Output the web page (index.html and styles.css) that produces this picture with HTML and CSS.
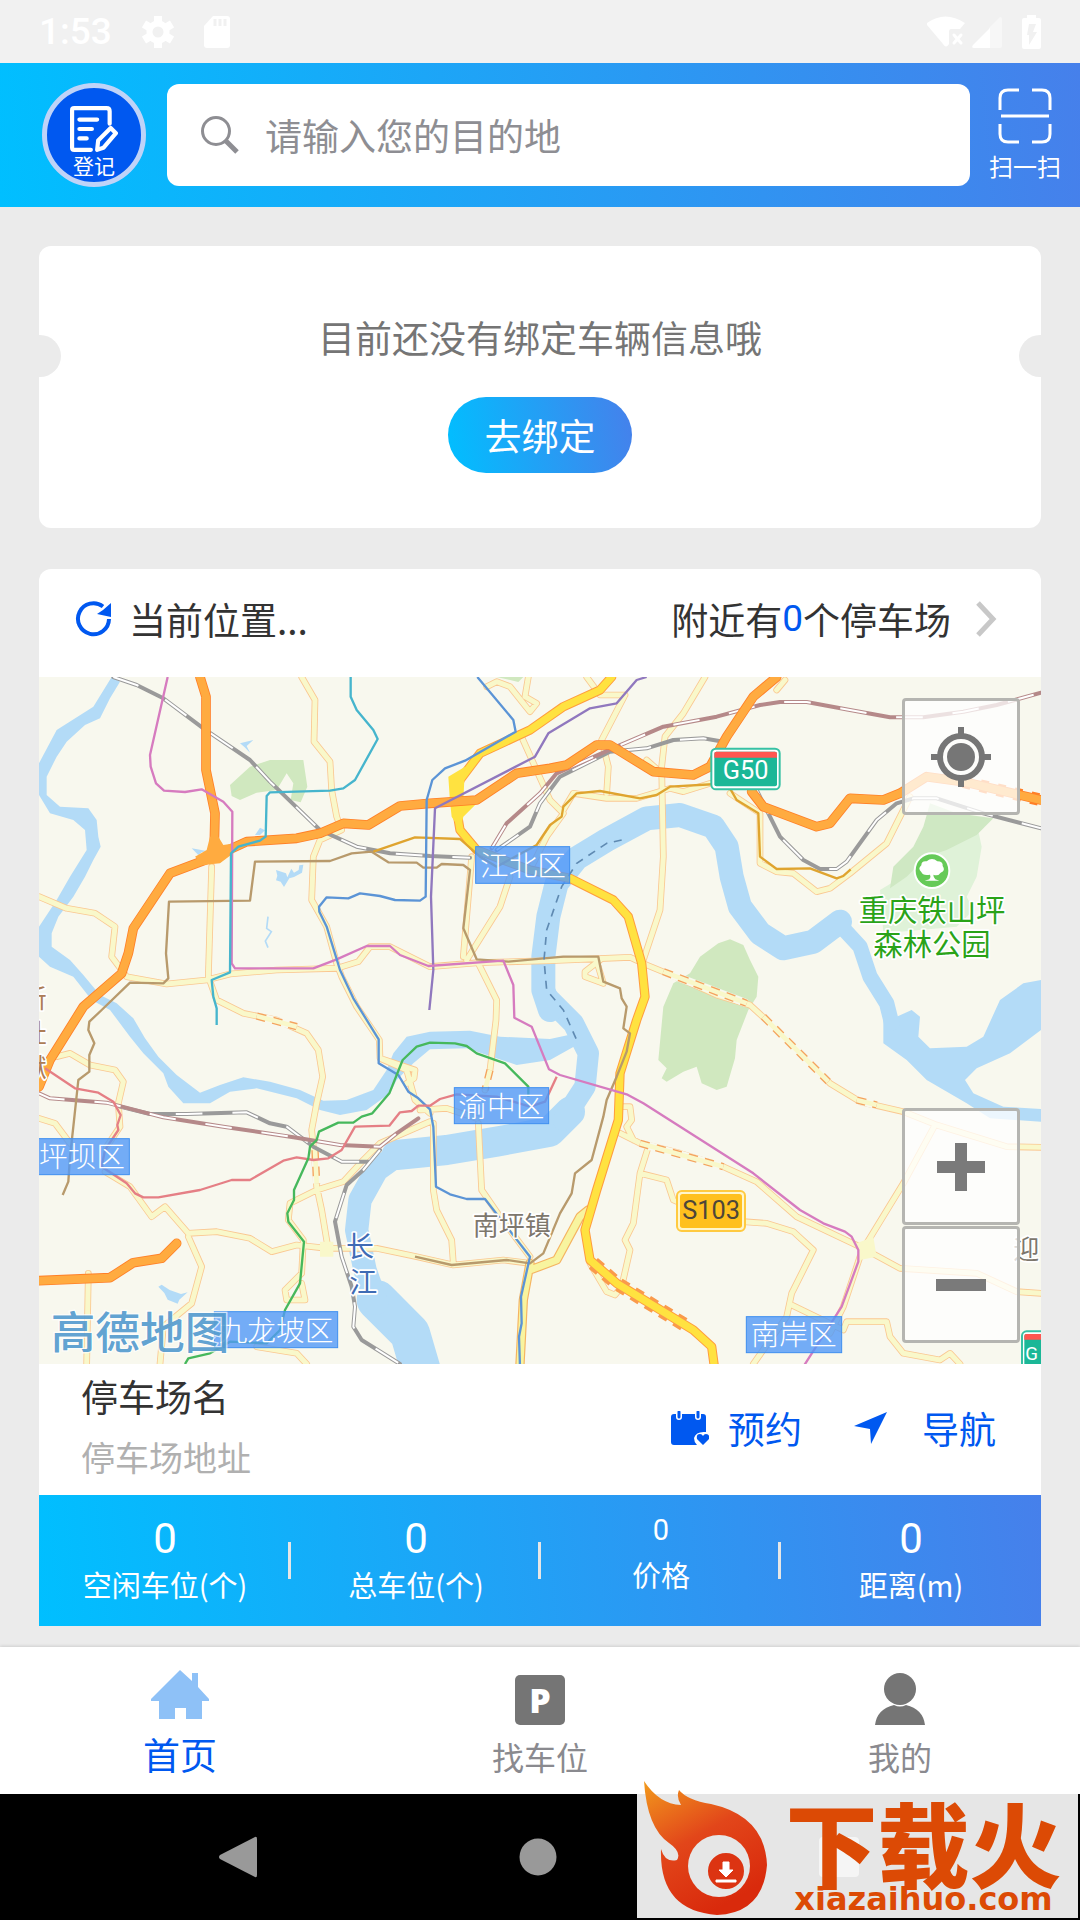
FILE: index.html
```html
<!DOCTYPE html>
<html lang="zh-CN">
<head>
    <meta charset="UTF-8">
    <meta name="viewport" content="width=device-width, initial-scale=1.0">
    <title>停车</title>
    <link rel="stylesheet" href="styles.css">
</head>
<body>
    <div class="status-bar">
        <span class="clock">1:53</span>
        <svg class="status-gear" width="32" height="34" viewBox="0 0 32 34" fill="none" stroke="#fff">
            <circle cx="16" cy="17" r="8.500" stroke-width="6"/>
            <path d="M16 1v6M16 27v6M2 9l5 3M25 22l5 3M2 25l5-3M25 12l5-3" stroke-width="8"/>
        </svg>
        <svg width="26" height="34" viewBox="0 0 26 34">
            <path d="M9 1h14q3 0 3 3v26q0 3-3 3H3q-3 0-3-3V11z" fill="#fff"/>
            <path d="M11 4v7M16 4v7M21 4v7" stroke="#f1f1f1" stroke-width="3"/>
        </svg>
        <svg class="status-right" width="40" height="34" viewBox="0 0 40 34">
            <path d="M1 8Q19-5 39 8l-5 6H25q-2 0-2 3v12q-3 5-6 0L1 10z" fill="#fff"/>
            <path d="M28 20l7 8M35 20l-7 8" stroke="#fff" stroke-width="3" stroke-linecap="round"/>
        </svg>
        <svg class="status-signal" width="30" height="34" viewBox="0 0 30 34">
            <path d="M28 2q2 0 2 2v27q0 2-2 2H17V13z" fill="#f7f7f7"/>
            <path d="M18 13v20H2q-3 0-1-3z" fill="#fff"/>
        </svg>
        <svg width="19" height="34" viewBox="0 0 19 34">
            <path d="M5 0h9v3h3q2 0 2 2v27q0 2-2 2H2q-2 0-2-2V5q0-2 2-2h3z" fill="#fff"/>
            <path d="M7 9h7l-3 8h4L7 30V20H5z" fill="#f1f1f1"/>
        </svg>
    </div>

    <header class="top-bar">
        <button class="register" type="button">
            <svg width="48" height="46" viewBox="0 0 46 44" fill="none" stroke="#fff" stroke-width="4" stroke-linecap="round" stroke-linejoin="round">
                <path d="M20 42H4q-2 0-2-2V4q0-2 2-2h31q3 0 3 3v12M9 13h17M9 22h12M9 31h7"/>
                <path d="M26 42l1-9 12-12 5 5-12 14z"/>
            </svg>
            <span>登记</span>
        </button>
        <form class="search">
            <svg width="38" height="38" viewBox="0 0 38 38" fill="none" stroke="#8e8e93">
                <circle cx="15" cy="15" r="13.500" stroke-width="3"/>
                <path d="M24 24l12 12" stroke-width="5"/>
            </svg>
            <input type="text" placeholder="请输入您的目的地" aria-label="目的地">
        </form>
        <button class="scan" type="button">
            <svg width="54" height="56" viewBox="0 0 54 56" fill="none" stroke="#fff" stroke-width="3">
                <path d="M2 22V10q0-8 8-8h11M34 2h10q8 0 8 8v12M2 36v10q0 8 8 8h11M34 54h10q8 0 8-8V36M3 28h48"/>
            </svg>
            <span>扫一扫</span>
        </button>
    </header>

    <main class="content">
        <section class="bind-card">
            <p>目前还没有绑定车辆信息哦</p>
            <button class="bind-btn" type="button">去绑定</button>
        </section>

        <section class="parking-card">
            <div class="parking-head">
                <svg width="38" height="38" viewBox="0 0 38 38">
                    <path d="M34 19A15.500 15.500 0 1 1 28 6.500" fill="none" stroke="#0058f0" stroke-width="4"/>
                    <path d="M36 3v14l-14-3 6-4z" fill="#0058f0"/>
                </svg>
                <span>当前位置...</span>
                <a class="nearby" href="#">附近有<b>0</b>个停车场
                    <svg width="22" height="36" viewBox="0 0 22 36" fill="none" stroke="#c8c8c8" stroke-width="5"><path d="M3 2l15 16L3 34"/></svg>
                </a>
            </div>

            <div class="map">
                <svg class="map-canvas" viewBox="27 21 3006 2061" preserveAspectRatio="xMidYMid slice">
                    <defs>
                        <path id="minor" d="M815 21L855 90 852 215 900 275 905 360 920 440 935 480 870 510 850 560 845 690 890 770 920 880 935 920 980 1010 1048 1110 1050 1165 1130 1200 1155 1290 1200 1330
                            M1060 1168L1155 1200 1152 1225 1130 1240
                            M27 680L110 715 195 730 255 770 245 860 290 920 410 942 530 930 600 912 740 900 920 895 985 875 1020 830 1080 830 1200 890 1345 878 1560 872 1800 862 1850 885 1960 930 2060 975 2160 1005 2220 1060 2400 1240 2490 1295 2620 1325 2720 1365 2930 1430 3033 1432
                            M545 590L535 920 560 990 640 1030 740 1050 830 1090 865 1140 878 1220 860 1300 845 1380 855 1480 860 1550 875 1620 895 1740
                            M1440 620L1410 710 1310 870M1325 560L1300 860M1345 880L1400 990 1398 1050 1380 1200 1365 1260M1345 1360L1355 1560 1410 1640 1500 1760
                            M1370 50L1400 35 1440 50 1480 100 1500 125 1520 100 1485 80 1495 21M1470 190L1560 390 1600 430 1550 500 1500 600
                            M2025 21L1960 130 1905 200 1895 290 1900 560 1890 720 1840 870
                            M1785 75L1715 210 1735 290 1730 370M1670 21L1710 75 1785 75M1850 270L1895 310M2265 30L2240 60
                            M1600 420L1630 370 1730 385 1820 385 1920 355 1960 365 2040 340M2100 370L2190 430 2190 580 2240 605 2290 610 2360 665 2400 655 2460 610 2570 520 2640 380
                            M1710 870L1665 905 1665 920 1720 940 1705 890
                            M80 1160L120 1150 180 1185 255 1200 280 1235 265 1300 270 1370 230 1430M27 1345L75 1360 120 1420
                            M225 1505L300 1550 365 1640 405 1610 475 1690 560 1685 660 1705 725 1745 800 1725 890 1735 1040 1735 1160 1760 1270 1785 1420 1770 1500 1780
                            M475 1700L515 1790 485 1900 400 1970 390 2082M175 1810L170 2082
                            M1200 1355L1050 1420 1000 1470 940 1535 860 1560 780 1600 775 1650 820 1710 815 1810 765 1860 770 1890 825 1890 815 1840
                            M1210 1360L1210 1560 1220 1620 1265 1710 1270 1780M680 2030L800 2050 830 2082M1170 1320L1250 1315 1340 1345
                            M1770 1390L1830 1420 1950 1450 2080 1490 2180 1535 2300 1640 2490 1730 2610 1795 2840 1810 2960 1865 3033 1870
                            M2510 1720L2620 1540 2715 1365M2490 1760L2440 1910 2400 1990M1855 1430L1830 1510 1810 1660 1785 1710 1800 1740 1775 1850 1755 1875 1730 1865 1680 1780
                            M1765 1310L1800 1310 1805 1350 1790 1370 1810 1410M1830 1510L1910 1530 1930 1590 2000 1620M2140 1655L2210 1660 2290 1685 2350 1740 2285 1870 2270 1940 2170 2082
                            M2285 1905L2440 1980 2450 1955 2570 1955 2580 2000 2620 2050 2730 2070 2760 2050 2790 2082"/>
                        <path id="medium" d="M1500 1800L1580 1770 1650 1640 1675 1620M1500 1780L1480 1890 1470 2082"/>
                        <path id="highway" d="M510 21L528 80 528 300 555 430 552 560M27 1250L60 1170 160 1010 275 910 295 850 310 775 420 610 552 560 650 515 800 505 870 490 940 460 1015 465 1110 408 1200 400 1340 390 1460 310 1560 295 1610 285 1700 225 1740 225 1870 305 1990 315 2040 290 2090 200 2170 80 2240 21
                            M2165 365L2200 410 2360 470 2400 460 2460 385 2560 390 2610 370 2690 320 2800 335 3033 390M27 1832L240 1823 310 1778 395 1765 440 1720"/>
                        <path id="express" d="M1745 21L1710 60 1600 110 1500 180 1350 250 1290 330 1275 390 1290 480 1340 540 1500 600 1620 625 1750 690 1795 740 1835 880 1845 980 1820 1050 1770 1210 1765 1350 1700 1560 1665 1680 1680 1770 1760 1840 1990 1980 2045 2030 2052 2082"/>
                        <path id="tunnel" d="M2200 1040L2395 1235M1900 905L2150 1000M1830 1420L2080 1490M855 1440L860 1540M1380 1200L1365 1260M680 1038L800 1070M2480 1290L2540 1305"/>
                        <path id="rail" d="M250 21L320 45 400 85 520 175 660 270 720 335 870 480 980 530 1080 550 1200 558 1320 563M270 1310L360 1332 470 1332 650 1327 720 1360 770 1370 850 1430 935 1475 1015 1475M1050 1440L1000 1500 950 1545 915 1655 935 1760 965 1850 975 1910 970 1970 995 2010 1110 2082
                            M1400 540L1500 470 1530 400 1560 360 1590 320 1740 245 1850 235 1930 210 2020 205 2080 215M2180 360L2210 420 2250 500 2320 570 2370 597 2420 597 2450 575 2540 450 2600 400 2650 385 2720 385 2860 430 3033 475"/>
                        <path id="rail-fast" d="M27 1270L60 1285 230 1298 400 1342 580 1370 800 1403 930 1425 1050 1430 1100 1390 1165 1345M1385 535L1430 460 1530 370 1580 310 1760 230 1900 170 2060 140 2190 105 2250 96 2330 96 2460 120 2580 142 2680 142 2800 125 2900 105 3033 68"/>
                    </defs>

                    <!-- water -->
                    <path class="water" d="M245 21L270 35 240 85 210 145 165 165 110 215 80 260 50 320 50 375 90 410 175 415 200 450 205 500 212 530 190 570 165 620 130 680 85 740 65 790 65 830 120 870 160 915 210 975 260 1000 310 1045 345 1105 385 1160 440 1215 510 1268 570 1245 640 1222 720 1235 810 1260 880 1292 950 1290 1030 1260 1070 1200 1090 1150 1130 1100 1200 1085 1320 1082 1410 1100 1560 1107 1640 1090 1650 1120 1560 1170 1460 1185 1370 1155 1310 1135 1200 1138 1150 1180 1100 1230 1080 1270 1010 1320 930 1335 870 1320 800 1285 680 1255 600 1265 540 1300 460 1300 415 1250 400 1210 340 1150 300 1100 240 1020 185 990 130 920 60 890 27 860 27 770 80 690 120 620 170 540 165 480 130 450 60 430 27 375 27 280 80 180 190 110z"/>
                    <path class="water" d="M2560 1000L2560 1120 2630 1170 2690 1230 2810 1300 2880 1345 3033 1355 3033 1317 2920 1310 2830 1270 2805 1230 2840 1195 2940 1150 3033 1080 3033 930 2980 940 2910 990 2860 1100 2810 1130 2700 1135 2665 1100 2670 1040 2645 1020 2600 1040z"/>
                    <g class="river">
                        <path d="M1175 2110L1140 1990 1040 1890" stroke-width="120"/>
                        <path d="M1040 1900L1005 1800 980 1680 990 1590 1040 1500 1110 1450" stroke-width="70"/>
                        <path d="M1100 1455L1250 1440 1400 1415 1560 1385 1620 1325" stroke-width="90"/>
                        <path d="M1600 1350L1665 1250 1675 1150 1630 1060 1550 980" stroke-width="64"/>
                        <path d="M1560 1020L1540 960 1540 860 1555 740 1580 640 1640 565 1730 510 1850 445 1950 435 2050 470 2090 530 2105 620 2130 710 2190 790 2260 835 2350 815 2430 755" stroke-width="72"/>
                        <path d="M2430 765L2490 830 2520 920 2570 1000 2585 1060" stroke-width="46"/>
                    </g>
                    <path class="water" d="M738 600l30 10 4 12 12-26 8 12 14-8 2-14 12-2-4 24-24 13-14 4-16 26-10-16-14-4 4-14zM630 220l40-10-20 18 10 20-16-16zM385 1850l10-6 24 16 34 12 20-5-25 22-5 12-30-12-10-20zM675 495l15-22 15 8-15 14zM485 535l45 8-15 4-10 8z"/>
                    <path d="M714 740l-4 35 14 10-18 28 8 20" fill="none" stroke="#b3dbf7" stroke-width="5"/>

                    <!-- parks -->
                    <path fill="#d0e8bf" d="M600 345L660 290 720 270 820 270 832 350 812 397 782 390 790 340 770 310 740 360 680 368 630 390 605 378zM2065 820L2100 808 2140 825 2160 870 2185 920 2180 980 2155 1020 2120 1110 2115 1165 2090 1250 2060 1260 2015 1240 2000 1190 1960 1205 1910 1235 1895 1225 1910 1195 1885 1170 1900 1010 1930 940 1980 910 2010 860zM1400 21l80 0-15 15z"/>
                    <path fill="#dff2d8" d="M2840 460L2855 530 2840 620 2810 680 2830 720 2780 770 2560 790 2550 660 2650 600 2740 520z"/>
                    <path fill="#cfe8c3" d="M2700 400L2780 430 2890 445 2840 495 2750 540 2690 560 2630 620 2580 655 2590 590 2650 530 2680 470z"/>

                    <!-- roads -->
                    <use href="#minor" class="line" stroke="#fac791" stroke-width="20"/>
                    <use href="#minor" class="line" stroke="#f9f8ca" stroke-width="15"/>
                    <use href="#tunnel" class="line dashed" stroke="#f8f8ee" stroke-width="24"/>
                    <use href="#tunnel" class="line dashed" stroke="#f4a35e" stroke-width="22" stroke-dasharray="28 22"/>
                    <use href="#tunnel" class="line dashed" stroke="#f9f8ca" stroke-width="14"/>
                    <path d="M870 1715h40v45h-40zM2480 1720l50-20 10 60-50 10z" fill="#f9f8ca"/>
                    <use href="#rail" class="line" stroke="#9a9a9a" stroke-width="12"/>
                    <use href="#rail" class="line dashed" stroke="#fff" stroke-width="6" stroke-dasharray="80 90"/>
                    <use href="#rail-fast" class="line" stroke="#b58989" stroke-width="12"/>
                    <use href="#rail-fast" class="line dashed" stroke="#fff" stroke-width="6" stroke-dasharray="80 90"/>
                    <use href="#medium" class="line" stroke="#f5b461" stroke-width="28"/>
                    <use href="#medium" class="line" stroke="#f8f49f" stroke-width="21"/>
                    <use href="#express" class="line" stroke="#ff9c3e" stroke-width="28"/>
                    <path class="line dashed" d="M1690 1780L1760 1840 1980 1974" stroke="#fa9a4b" stroke-width="42" stroke-dasharray="28 22"/>
                    <use href="#express" class="line" stroke="#ffe240" stroke-width="22"/>
                    <path d="M1255 320l50-30-5 100 45 5-45 45-10 40-25-40-5-45z" fill="#ffe240"/>
                    <path class="line dashed" d="M2800 335L3033 390" stroke="#ff7f27" stroke-width="38" stroke-dasharray="24 28"/>
                    <use href="#highway" class="line" stroke="#ff7f27" stroke-width="29"/>
                    <use href="#highway" class="line" stroke="#ffab40" stroke-width="24"/>
                    <path d="M540 500l25 0 15 25 35-5-5 30-40 30-50 5-25-25 35-20z" fill="#ffab40"/>

                    <!-- metro lines -->
                    <g class="metro">
                        <path stroke="#b89a6c" d="M98 1575L115 1535 120 1460 130 1370 145 1230 178 1205 178 1155 193 1120 175 1080 178 1055 215 1020 300 938 400 940 415 925 408 850 417 695 660 692 675 575 900 573 965 550 1025 545 1075 577 1160 578 1180 593 1220 593 1235 582 1300 585 1320 600 1300 775 1340 868 1435 875 1600 860 1705 860 1720 935 1770 955 1775 985 1790 1010 1780 1075 1800 1090 1790 1145 1760 1220 1730 1290 1720 1340 1685 1470 1635 1510 1625 1570 1590 1630 1540 1750 1500 1780 1430 1770 1265 1785 1155 1760"/>
                        <path stroke="#dfa42f" d="M1030 545L1155 502 1290 507 1350 560 1400 590 1520 525 1560 465 1595 440 1600 410 1640 370 1710 363 1830 385 1880 375 1920 350 2060 342M2100 355L2120 390 2185 430 2190 560 2240 597 2340 595 2420 625 2440 618 2462 598"/>
                        <path stroke="#9078be" d="M1850 21L1820 30 1760 100 1680 115 1555 190 1515 260 1215 415 1203 680 1210 900 1198 1020"/>
                        <path stroke="#d67bbf" d="M413 21L360 255 362 290 378 340 402 362 465 366 515 358 580 395 607 425 605 880 615 895 850 895 920 868 1010 828 1080 828 1110 855 1195 888 1420 872 1450 945 1453 1043 1505 1070 1557 1198 1590 1215 1790 1273 1840 1300 2170 1510 2310 1620 2380 1660 2445 1685 2465 1700 2485 1740 2485 1775 2435 1910 2320 2090"/>
                        <path stroke="#5b94d6" d="M1342 21L1450 150 1457 185 1305 272 1245 295 1207 330 1190 390 1187 680 1170 692 1095 690 1050 678 990 670 955 685 890 682 867 710 868 725 890 770 930 900 970 985 1046 1108 1046 1180 1105 1215 1135 1265 1165 1285 1200 1318 1210 1370 1218 1550 1260 1573 1310 1587 1365 1587 1500 1760 1473 1880 1475 1960 1467 2000 1470 2090"/>
                        <path stroke="#46b5cd" d="M962 21L962 80 980 120 1030 180 1043 207 975 330 940 355 900 362 720 367 710 378 707 500 690 512 625 530 603 550 600 907 545 930 550 980 560 1015 560 1065"/>
                        <path stroke="#e57f85" d="M45 1195L135 1255 205 1268 250 1295 272 1335 262 1365 265 1380 225 1440 215 1490 290 1540 315 1570 340 1582 385 1582 510 1560 605 1530 660 1530 760 1472 800 1462 850 1470 895 1465 935 1440 975 1370 1078 1367 1110 1327 1145 1323 1165 1307 1200 1307 1230 1287 1280 1273 1400 1280 1500 1310 1545 1295 1580 1220"/>
                        <path stroke="#46b85c" d="M465 2082L475 2065 540 2050 600 2015 710 2020 750 1980 765 1920 810 1840 822 1715 775 1655 772 1630 792 1590 792 1560 835 1465 840 1430 860 1410 867 1385 925 1358 970 1358 995 1340 1027 1330 1078 1270 1118 1170 1160 1130 1200 1118 1275 1120 1310 1128 1340 1150 1425 1180 1495 1250 1495 1280"/>
                    </g>
                    <path class="line dashed" d="M1775 510L1730 520 1640 580 1595 650 1550 780 1542 870 1550 960 1600 1020 1640 1110" stroke="#5f8ab2" stroke-width="5" stroke-dasharray="24 20"/>

                    <!-- place names -->
                    <g class="district">
                        <rect x="1337" y="530" width="282" height="110"/><text x="1350" y="617">江北区</text>
                        <rect x="1273" y="1253" width="283" height="108"/><text x="1285" y="1340">渝中区</text>
                        <rect x="0" y="1406" width="298" height="108"/><text x="27" y="1492">坪坝区</text>
                        <rect x="553" y="1925" width="370" height="108"/><text x="566" y="2012">九龙坡区</text>
                        <rect x="2149" y="1940" width="286" height="108"/><text x="2162" y="2026">南岸区</text>
                    </g>
                    <g class="halo">
                        <text x="1328" y="1695" font-size="78" fill="#7d776d">南坪镇</text>
                        <text x="2950" y="1768" font-size="78" fill="#7d776d">迎</text>
                        <text x="-28" y="1015" font-size="78" fill="#ad7d56">新</text>
                        <text x="-28" y="1118" font-size="78" fill="#ad7d56">址</text>
                        <text x="-28" y="1222" font-size="78" fill="#ad7d56">狱</text>
                        <text x="948" y="1762" font-size="84" fill="#3f6cb5">长</text>
                        <text x="958" y="1868" font-size="84" fill="#3f6cb5">江</text>
                        <text x="2486" y="752" font-size="88" fill="#2aa318">重庆铁山坪</text>
                        <text x="2530" y="854" font-size="88" fill="#2aa318">森林公园</text>
                    </g>
                    <circle cx="2706" cy="602" r="52" fill="#66ca58" stroke="#fff" stroke-width="6"/>
                    <path fill="#fff" d="M2700 614q-22 4-26-8-12-10 0-20 0-14 16-12 16-14 32 0 18 0 16 14 10 14-6 20-8 12-22 6 0 8 6 14l12 4h-44l14-4q6-8 2-14z"/>

                    <!-- road shields -->
                    <rect x="2044" y="236" width="205" height="122" rx="14" fill="#fff" stroke="#37c1a4" stroke-width="6"/>
                    <rect x="2053" y="245" width="188" height="104" rx="6" fill="#1bb797"/>
                    <path d="M2053 263v-12q0-6 6-6h176q6 0 6 6v12z" fill="#ff5650"/>
                    <text class="shield" x="2147" y="328" fill="#fff">G50</text>
                    <rect x="1941" y="1563" width="204" height="120" rx="14" fill="#fff6cc" stroke="#ffca40" stroke-width="6"/>
                    <rect x="1950" y="1572" width="186" height="102" rx="8" fill="#ffc01e"/>
                    <text class="shield" x="2043" y="1648" fill="#4d463a">S103</text>
                    <rect x="2976" y="1984" width="205" height="122" rx="14" fill="#fff" stroke="#37c1a4" stroke-width="6"/>
                    <rect x="2983" y="1992" width="188" height="104" rx="6" fill="#1bb797"/>
                    <path d="M2983 2009v-11q0-6 6-6h60v17z" fill="#ff5650"/>
                    <text class="shield-cut" x="2986" y="2070" fill="#fff">G</text>

                    <text class="map-logo" x="62" y="2038">高德地图</text>
                </svg>

                <button class="map-btn locate" type="button" aria-label="定位">
                    <svg width="60" height="60" viewBox="0 0 60 60">
                        <circle cx="30" cy="30" r="21" fill="none" stroke="#767676" stroke-width="6"/>
                        <circle cx="30" cy="30" r="14" fill="#767676"/>
                        <path d="M30 0v9M30 51v9M0 30h9M51 30h9" stroke="#767676" stroke-width="6"/>
                    </svg>
                </button>
                <div class="zoom">
                    <button class="map-btn" type="button" aria-label="放大">
                        <svg width="50" height="50" viewBox="0 0 50 50"><path d="M25 1v48M1 25h48" stroke="#7a7a7a" stroke-width="12"/></svg>
                    </button>
                    <button class="map-btn" type="button" aria-label="缩小">
                        <svg width="50" height="50" viewBox="0 0 50 50"><path d="M0 25h50" stroke="#7a7a7a" stroke-width="12"/></svg>
                    </button>
                </div>
            </div>

            <div class="lot">
                <div class="lot-info">
                    <h2>停车场名</h2>
                    <p>停车场地址</p>
                </div>
                <a class="lot-action" href="#">
                    <svg width="38" height="34" viewBox="0 0 38 34">
                        <path d="M3 3h2v3q0 3 3 3t3-3V3h13v3q0 3 3 3t3-3V3h2q3 0 3 3v15q-10-1-12 6 0 4 3 7H3q-3 0-3-3V6q0-3 3-3z" fill="#0058f0"/>
                        <path d="M8 1v5M27 1v5" stroke="#0058f0" stroke-width="3" stroke-linecap="round"/>
                        <path d="M32 34l-6-6q-1-5 3-5 2 0 3 2 1-2 3-2 4 0 3 5z" fill="#0058f0"/>
                    </svg>
                    预约
                </a>
                <a class="lot-action navigate" href="#">
                    <svg width="34" height="32" viewBox="0 0 34 32"><path d="M33 0L17 32l-1-15L0 14z" fill="#0058f0"/></svg>
                    导航
                </a>
            </div>

            <dl class="stats">
                <div><dd>0</dd><dt>空闲车位(个)</dt></div>
                <div><dd>0</dd><dt>总车位(个)</dt></div>
                <div class="price"><dd>0</dd><dt>价格</dt></div>
                <div><dd>0</dd><dt>距离(m)</dt></div>
            </dl>
        </section>
    </main>

    <nav class="tabs">
        <a class="active" href="#">
            <svg width="58" height="50" viewBox="0 0 58 50"><path d="M29 0l12 11V3h6v14l11 12v2h-7v18H35V38H24v11H8V31H0v-2z" fill="#8ec1f7"/></svg>
            首页
        </a>
        <a href="#">
            <svg width="50" height="50" viewBox="0 0 50 50"><rect width="50" height="50" rx="5" fill="#757575"/><text class="tab-letter" x="25" y="38" fill="#fff">P</text></svg>
            找车位
        </a>
        <a href="#">
            <svg width="50" height="52" viewBox="0 0 50 52"><circle cx="25" cy="16" r="16" fill="#757575"/><path d="M0 52q2-16 19-20 6 3 12 0 17 4 19 20z" fill="#757575"/></svg>
            我的
        </a>
    </nav>

    <footer class="system-nav">
        <button type="button" aria-label="返回"><svg width="38" height="42" viewBox="0 0 38 42"><path d="M36 1q2-1 2 2v36q0 3-2 2L1 23q-2-2 0-4z" fill="#999"/></svg></button>
        <button type="button" aria-label="主页"><svg width="38" height="38" viewBox="0 0 38 38"><circle cx="19" cy="19" r="18.500" fill="#999"/></svg></button>
        <button type="button" aria-label="最近任务"><svg width="40" height="40" viewBox="0 0 40 40"><rect width="40" height="40" rx="4" fill="#999"/></svg></button>
        <div class="badge">
            <svg width="132" height="136" viewBox="0 0 132 136">
                <defs>
                    <linearGradient id="flame" x1="0" y1="0" x2="0.500" y2="1">
                        <stop offset="0" stop-color="#f29a1d"/><stop offset="0.500" stop-color="#e2461a"/><stop offset="1" stop-color="#d92a0c"/>
                    </linearGradient>
                </defs>
                <path fill="url(#flame)" d="M7 1Q22 24 44 25q-5-8-2-15 8 10 32 14 54 12 56 61-4 48-50 50-58-4-56-66 4 14 16 11 5-8-8-17Q10 48 7 1z"/>
                <circle cx="82" cy="86" r="31" fill="#e6e6e6"/>
                <circle cx="89" cy="91" r="19" fill="#dc3412" stroke="#e6e6e6" stroke-width="2"/>
                <path d="M86 82h6v8h4l-7 7-7-7h4zM79 100h20v2H79z" fill="#fff" stroke="#fff"/>
            </svg>
            <div class="badge-text"><b>下载火</b><span>xiazaihuo.com</span></div>
        </div>
    </footer>
</body>
</html>
```
FILE: styles.css
```css
* {
    box-sizing: border-box;
}
body {
    margin: 0;
    min-height: 100vh;
    display: flex;
    flex-direction: column;
    background: #ebebeb;
    color: #333;
    font-family: "Noto Sans CJK SC", Roboto, sans-serif;
    font-size: 37px;
    line-height: 54px;
}
svg {
    display: block;
    flex: none;
}
button {
    padding: 0;
    border: 0;
    background: none;
    color: #fff;
    font: inherit;
    cursor: pointer;
}
a {
    color: inherit;
    text-decoration: none;
}
p, h2, dl, dd {
    margin: 0;
}

/* status bar */
.status-bar {
    display: flex;
    align-items: center;
    height: 63px;
    padding: 0 39px;
    background: #f1f1f1;
    color: #fff;
    font-family: Roboto, sans-serif;
    font-weight: 500;
}
.status-gear {
    margin: 0 30px;
}
.status-right {
    margin-left: auto;
}
.status-signal {
    margin: 0 20px 0 6px;
}

/* header */
.top-bar {
    display: flex;
    align-items: center;
    height: 144px;
    padding: 0 13px 0 42px;
    background: linear-gradient(85deg, #00bfff, #4680eb);
}
.register {
    display: flex;
    flex-direction: column;
    align-items: center;
    width: 104px;
    height: 104px;
    padding-top: 18px;
    border: 5px solid #bfd3f8;
    border-radius: 50%;
    background: #0058f0;
    font-size: 21px;
    line-height: 26px;
}
.search {
    flex: 1;
    display: flex;
    align-items: center;
    gap: 26px;
    height: 102px;
    margin: 0 13px 0 21px;
    padding: 0 34px;
    border-radius: 12px;
    background: #fff;
}
.search input {
    flex: 1;
    min-width: 0;
    padding: 0;
    border: 0;
    outline: 0;
    background: none;
    font: inherit;
}
.search input::placeholder {
    color: #8e8e93;
}
.scan {
    display: flex;
    flex-direction: column;
    align-items: center;
    gap: 5px;
    width: 84px;
    font-size: 24px;
    line-height: 34px;
    white-space: nowrap;
}

.content {
    padding: 39px 39px 21px;
}

/* bind card */
.bind-card {
    position: relative;
    display: flex;
    flex-direction: column;
    align-items: center;
    gap: 33px;
    height: 282px;
    margin-bottom: 41px;
    padding-top: 64px;
    overflow: hidden;
    border-radius: 12px;
    background: #fff;
    color: #757575;
}
.bind-card::before,
.bind-card::after {
    content: "";
    position: absolute;
    top: 89px;
    width: 42px;
    height: 42px;
    border-radius: 50%;
    background: #ebebeb;
}
.bind-card::before {
    left: -20px;
}
.bind-card::after {
    right: -20px;
}
.bind-btn {
    width: 184px;
    height: 76px;
    border-radius: 38px;
    background: linear-gradient(80deg, #00bfff, #4680eb);
}

/* parking card */
.parking-card {
    overflow: hidden;
    border-radius: 12px 12px 0 0;
    background: #fff;
}
.parking-head {
    display: flex;
    align-items: center;
    gap: 16px;
    height: 108px;
    padding: 0 44px 8px 36px;
}
.nearby {
    display: flex;
    align-items: center;
    margin-left: auto;
}
.nearby b {
    color: #0058f0;
    font-family: Roboto, sans-serif;
    font-weight: 400;
}
.nearby svg {
    margin-left: 24px;
}

.map {
    position: relative;
}
.map-canvas {
    width: 100%;
    aspect-ratio: 1002 / 687;
    background: #f8f8ee;
}
.water {
    fill: #b3dbf7;
}
.river {
    fill: none;
    stroke: #b3dbf7;
    stroke-linejoin: round;
    stroke-linecap: round;
}
.line {
    fill: none;
    stroke-linejoin: round;
    stroke-linecap: round;
}
.dashed {
    stroke-linecap: butt;
}
.metro {
    fill: none;
    stroke-width: 7;
    stroke-linejoin: round;
}
.district rect {
    fill: #5199f8;
    fill-opacity: 0.8;
    stroke: #3f8ff0;
    stroke-width: 3;
}
.district text {
    fill: #fff;
    font-size: 86px;
    font-weight: 300;
}
.halo {
    paint-order: stroke;
    stroke: #fff;
    stroke-width: 10;
    stroke-linejoin: round;
}
.shield {
    font-family: Roboto, sans-serif;
    font-size: 76px;
    text-anchor: middle;
}
.shield-cut {
    font-family: Roboto, sans-serif;
    font-size: 56px;
}
.map-logo {
    fill: #4d97cd;
    fill-opacity: 0.9;
    stroke: #fff;
    stroke-opacity: 0.7;
    stroke-width: 8;
    paint-order: stroke;
    font-size: 134px;
    font-weight: 500;
}
.map-btn {
    display: flex;
    align-items: center;
    justify-content: center;
    width: 118px;
    height: 117px;
    border: 3px solid #b5b5b1;
    border-radius: 4px;
    background: rgba(255, 255, 255, 0.75);
}
.locate {
    position: absolute;
    top: 21px;
    right: 21px;
}
.zoom {
    position: absolute;
    right: 21px;
    bottom: 21px;
    display: grid;
    gap: 1px;
}

/* parking lot */
.lot {
    display: flex;
    height: 131px;
    padding: 0 45px 0 42px;
}
.lot-info {
    flex: 1;
    padding-top: 5px;
}
.lot-info h2 {
    font-size: 37px;
    font-weight: 400;
}
.lot-info p {
    margin-top: 7px;
    color: #b0b0b0;
    font-size: 34px;
}
.lot-action {
    display: flex;
    align-items: center;
    gap: 19px;
    padding-bottom: 4px;
    color: #0058f0;
}
.navigate {
    gap: 34px;
    margin-left: 52px;
}

.stats {
    display: grid;
    grid-template-columns: 252fr 250fr 240fr 260fr;
    height: 131px;
    background: linear-gradient(85deg, #00bfff, #4680eb);
    color: #fff;
    text-align: center;
}
.stats > div {
    display: flex;
    flex-direction: column;
    padding-top: 19px;
    background: linear-gradient(#e6e6e6, #e6e6e6) right 47px / 3px 37px no-repeat;
}
.stats > div:last-child {
    background: none;
}
.stats dd {
    font-family: Roboto, sans-serif;
    font-size: 42px;
    line-height: 50px;
}
.stats dt {
    font-size: 29px;
    line-height: 40px;
}
.stats .price dd {
    font-size: 29px;
    line-height: 32px;
}
.stats .price dt {
    line-height: 56px;
}

/* bottom tabs */
.tabs {
    display: grid;
    grid-template-columns: repeat(3, 1fr);
    height: 147px;
    margin-top: auto;
    background: #fff;
    box-shadow: 0 -1px 3px rgba(0, 0, 0, 0.12);
    color: #8a8a8f;
    font-size: 32px;
}
.tabs a {
    display: flex;
    flex-direction: column;
    align-items: center;
    justify-content: flex-end;
    gap: 4px;
    padding-bottom: 11px;
}
.tabs .active {
    gap: 7px;
    padding-bottom: 13px;
    color: #0058f0;
    font-size: 37px;
}
.tab-letter {
    font-family: "Open Sans", sans-serif;
    font-size: 34px;
    font-weight: 800;
    text-anchor: middle;
}

.system-nav {
    position: relative;
    display: flex;
    align-items: center;
    justify-content: space-between;
    height: 126px;
    padding: 0 221px 0 219px;
    background: #000;
}
.badge {
    position: absolute;
    right: 2px;
    bottom: 2px;
    display: flex;
    width: 441px;
    height: 138px;
    background: rgba(255, 255, 255, 0.9);
}
.badge-text {
    display: flex;
    flex-direction: column;
    align-items: center;
    flex: 1;
    color: #dc4a05;
}
.badge-text b {
    padding-top: 20px;
    font-size: 92px;
    font-weight: 900;
    line-height: 82px;
}
.badge-text span {
    font-family: "DejaVu Sans", sans-serif;
    font-size: 32px;
    font-weight: 700;
    line-height: 34px;
}
```
